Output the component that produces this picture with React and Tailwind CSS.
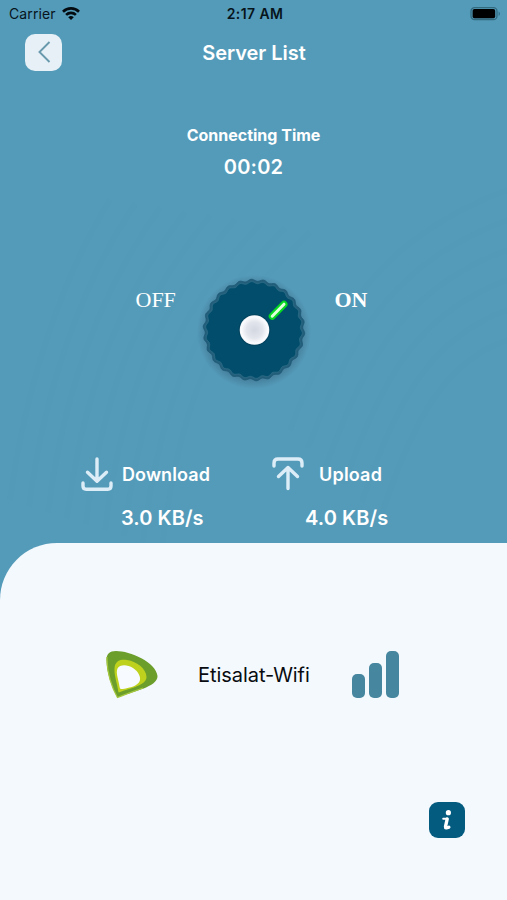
const gear = (radius, depth, teeth = 26) => {
  const points = [];
  for (let i = 0; i < 520; i++) {
    const a = (i / 520) * Math.PI * 2;
    const r = radius + depth * Math.cos(teeth * (a + Math.PI / 2 + 0.05));
    points.push(`${(60 + r * Math.cos(a)).toFixed(2)},${(60 + r * Math.sin(a)).toFixed(2)}`);
  }
  return `M${points.join('L')}Z`;
};

function StatusBar() {
  return (
    <div className="flex h-7 items-center justify-between pl-[9px] pr-[6px] text-[14px] leading-7 text-[#07141b]">
      <div className="flex w-[100px] items-center gap-[6px]">
        <span className="tracking-[0.1px]">Carrier</span>
        <svg width="18" height="14" viewBox="0 0 18 14" fill="none" stroke="#030b10" strokeWidth="2.6">
          <path d="M1 4.7a11.4 11.4 0 0 1 16 0" />
          <path d="M4.1 7.9a7 7 0 0 1 9.8 0" />
          <path d="M9 13.1 6.2 10.3a4 4 0 0 1 5.6 0Z" fill="#030b10" stroke="none" />
        </svg>
      </div>
      <span className="font-semibold tracking-[0.4px]">2:17 AM</span>
      <div className="flex w-[100px] justify-end">
        <svg width="31" height="14" viewBox="0 0 31 14">
          <rect x="1" y="0.7" width="26" height="11.8" rx="3.6" fill="none" stroke="#326a80" strokeWidth="1.3" />
          <rect x="2.6" y="2" width="22.6" height="9.2" rx="1.8" fill="#000" />
          <path d="M28.6 4.5v4.4c1.9-.8 1.9-3.6 0-4.4" fill="#32708a" />
        </svg>
      </div>
    </div>
  );
}

function Knob() {
  return (
    <svg width="120" height="120" viewBox="0 0 120 120" className="block">
      <defs>
        <radialGradient id="cap">
          <stop offset="0" stopColor="#d3d7e1" />
          <stop offset="0.55" stopColor="#e2e5ec" />
          <stop offset="0.9" stopColor="#fbfcfe" />
          <stop offset="1" stopColor="#f0f3f7" />
        </radialGradient>
        <radialGradient id="shade">
          <stop offset="0.8" stopColor="#35617d" stopOpacity="0.55" />
          <stop offset="1" stopColor="#35617d" stopOpacity="0" />
        </radialGradient>
      </defs>
      <circle cx="60" cy="62" r="57" fill="url(#shade)" />
      <path d={gear(49.8, 1)} fill="#245f7b" stroke="#1a5672" strokeWidth="0.8" />
      <path d={gear(47.4, 1)} fill="#024d6b" stroke="#33728d" strokeWidth="0.7" />
      <path d="m78.2 46.2 11.8-12" stroke="#05d820" strokeWidth="7" strokeLinecap="round" />
      <path d="m78.2 46.2 11.8-12" stroke="#dfffdc" strokeWidth="3" strokeLinecap="round" />
      <circle cx="60.5" cy="60" r="15.8" fill="#023b54" opacity="0.6" />
      <circle cx="60.5" cy="60" r="14.8" fill="url(#cap)" />
    </svg>
  );
}

function Waves() {
  return (
    <svg className="absolute inset-0 h-full w-full" viewBox="0 0 507 900" preserveAspectRatio="none" fill="none" stroke="#3d8bab" strokeWidth="5" opacity="0.06">
      {[0, 1, 2, 3, 4, 5, 6, 7, 8].map(i => (
        <path key={i} d={`M${10 + i * 19} ${500 + i * 6}C${25 + i * 20} ${390 - i * 4} ${60 + i * 22} ${280 + i * 3} ${110 + i * 25} ${200 + i * 4}`} />
      ))}
      {[0, 1, 2, 3, 4, 5].map(i => (
        <path key={i} d={`M${290 + i * 18} ${430 + i * 18}C${340 + i * 15} ${300 + i * 22} ${390 + i * 12} ${235 + i * 25} 507 ${190 + i * 30}`} />
      ))}
    </svg>
  );
}

function DownloadIcon() {
  return (
    <svg width="32" height="34" viewBox="0 0 32 34" fill="none" stroke="#dcedf8" strokeWidth="3.4" strokeLinecap="round" strokeLinejoin="round">
      <path d="M16 2v22M6.5 15.2l9.5 9 9.5-9" />
      <path d="M2 26v3q0 3.2 3.2 3.2h21.6q3.2 0 3.2-3.2v-3" />
    </svg>
  );
}

function UploadIcon() {
  return (
    <svg width="32" height="34" viewBox="0 0 32 34" fill="none" stroke="#dcedf8" strokeWidth="3.4" strokeLinecap="round" strokeLinejoin="round">
      <path d="M16 31.5v-21M6.5 19.5l9.5-9 9.5 9" />
      <path d="M2 9V6q0-4 4-4h20q4 0 4 4v3" />
    </svg>
  );
}

function EtisalatLogo() {
  return (
    <svg width="52" height="49" viewBox="0 0 52 49">
      <path d="M11.5 47.5C6 38 .5 22 .5 10 .5 4 3.5 1 10 1c14 0 40 11 41.5 25C52 37 26 41.5 11.5 47.5Z" fill="#6b9e2b" />
      <path d="M1 7C.5 22 6 38 11.5 47.5 19 44 29 41 37 38" fill="none" stroke="#a4c73e" strokeWidth="1.3" />
      <path d="M12.5 42.5C11 32 7.5 24 8.7 16.500 10 10.500 15 9 21 10c10 1.500 19.500 9 19.500 17 0 8-15 11-28 15.500Z" fill="#bed21d" />
      <path d="M13.500 36.500C12.500 29 9.500 23 11.500 18.500c2.500-4.500 10-4 15.500-.5 5.500 3.700 8.500 9.500 6.500 13.500-2.300 4.500-9 6-16.500 7.500-2.500.4-3.300-.5-3.500-2.500Z" fill="#f7faff" />
    </svg>
  );
}

function App() {
  return (
    <div className="relative flex h-[900px] w-full flex-col overflow-hidden bg-[#549bb9] font-['Inter',sans-serif] text-white">
      <Waves />
      <div className="relative">
        <StatusBar />

        <header className="grid h-12 grid-cols-[1fr_auto_1fr] items-center pl-[25px]">
          <button aria-label="Back" className="flex h-[37px] w-[37px] items-center justify-center rounded-[10px] bg-[#e6f0f6] text-[#6899ad]">
            <svg width="14" height="24" viewBox="0 0 14 24" fill="none" stroke="currentColor" strokeWidth="1.9">
              <path d="M12.5 2 2.5 12l10 10" />
            </svg>
          </button>
          <h1 className="mr-[24px] pt-px text-[20px] font-semibold tracking-[-0.05px]">Server List</h1>
        </header>

        <section className="flex flex-col items-center pt-[47px]">
          <p className="text-[16px] font-bold leading-6">Connecting Time</p>
          <p className="mt-2 text-[20px] font-semibold leading-6 tracking-[0.2px]">00:02</p>
        </section>

        <section className="mt-[91px] flex justify-center font-['Liberation_Serif',serif] text-[22px] leading-6">
          <span className="mt-[18px] w-[58px]">OFF</span>
          <Knob />
          <span className="mt-[18px] w-[58px] pl-[21px] font-bold">ON</span>
        </section>

        <section className="mt-[67px] grid h-[86px] grid-cols-[191px_1fr] pl-[81px]">
          <div>
            <div className="flex items-center gap-[9px]">
              <DownloadIcon />
              <span className="text-[18px] font-semibold tracking-[0.1px]">Download</span>
            </div>
            <p className="ml-10 mt-[15px] text-[20px] font-semibold leading-6 tracking-[0.05px]">3.0 KB/s</p>
          </div>
          <div>
            <div className="flex items-center gap-[15px]">
              <UploadIcon />
              <span className="text-[18px] font-semibold tracking-[0.2px]">Upload</span>
            </div>
            <p className="ml-[33px] mt-[15px] text-[20px] font-semibold leading-6 tracking-[0.1px]">4.0 KB/s</p>
          </div>
        </section>
      </div>

      <main className="relative flex flex-1 flex-col rounded-tl-[57px] bg-[#f4f9fd] text-[#080c10]">
        <div className="flex items-center pl-[106px] pt-[107px]">
          <EtisalatLogo />
          <span className="ml-10 w-[114px] text-[20px] tracking-[-0.05px]">Etisalat-Wifi</span>
          <div className="ml-10 flex h-12 items-end gap-1 pb-px">
            <span className="h-[24px] w-[13px] rounded-[5px] bg-[#46869f]" />
            <span className="h-[35px] w-[13px] rounded-[5px] bg-[#46869f]" />
            <span className="h-[47px] w-[13px] rounded-[5px] bg-[#46869f]" />
          </div>
        </div>
        <button aria-label="Information" className="mb-[62px] mr-[42px] mt-auto flex h-9 w-9 items-center justify-center self-end rounded-[9px] bg-[#045b80]">
          <svg width="14" height="22" viewBox="0 0 14 22" fill="none" stroke="#fff" strokeLinecap="round" strokeLinejoin="round">
            <circle cx="8.4" cy="3.7" r="2.6" fill="#fff" stroke="none" />
            <path d="M3.2 9.800h2.800" strokeWidth="2" />
            <path d="M7.200 10 5.500 17.600q-.2 2.200 3.300.6" strokeWidth="3.4" />
          </svg>
        </button>
      </main>
    </div>
  );
}

export default App;
